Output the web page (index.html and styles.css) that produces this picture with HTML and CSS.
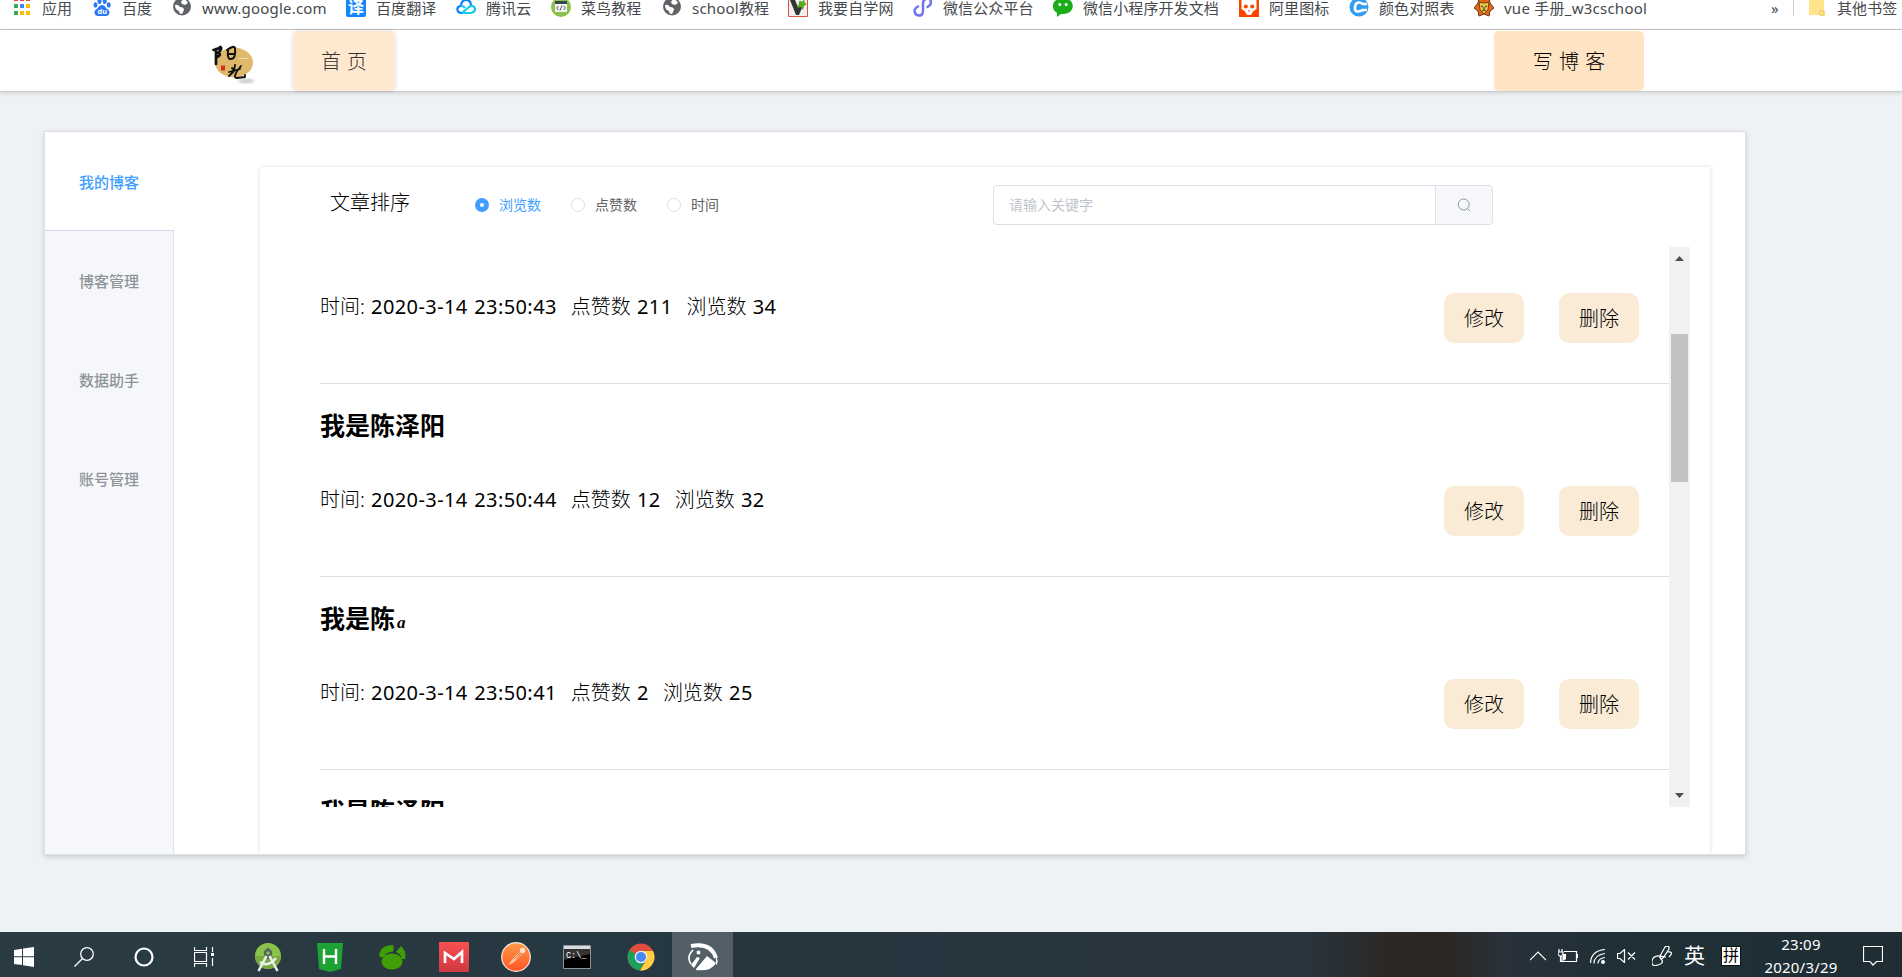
FILE: index.html
```html
<!DOCTYPE html>
<html lang="zh-CN">
<head>
<meta charset="utf-8">
<title>我的博客</title>
<link rel="stylesheet" href="styles.css">
</head>
<body>
<svg class="defs" width="0" height="0">
  <symbol id="globe" viewBox="0 0 20 20"><circle cx="10" cy="9.500" r="9" fill="#5f6368"/><path d="M3 8q3-1 5 2 4 0 4 3l-2 4q-3 0-3-3-4-1-4-6ZM11 2q4 1 5 4l-3 2-3-1-1-2Z" fill="#fff"/></symbol>
</svg>

<nav class="bookmarks">
  <div class="bookmarks-row">
    <a class="bm"><svg viewBox="0 0 20 20"><g fill="#ea4335"><path d="M2 0h4v4H2zM8 0h4v4H8zM14 0h4v4h-4z"/></g><path d="M2 7h4v4H2z" fill="#34a853"/><path d="M8 7h4v4H8z" fill="#4285f4"/><path d="M14 7h4v4h-4z" fill="#fbbc05"/><path d="M2 14h4v4H2z" fill="#34a853"/><path d="M8 14h4v4H8zM14 14h4v4h-4z" fill="#fbbc05"/></svg><span>应用</span></a>
    <a class="bm"><svg viewBox="0 0 20 20" fill="#2d78f4"><ellipse cx="7.500" cy="4" rx="2" ry="3"/><ellipse cx="12.700" cy="4" rx="2" ry="3"/><ellipse cx="3.500" cy="8" rx="2" ry="2.700"/><ellipse cx="16.700" cy="8" rx="2" ry="2.700"/><path d="M10 8c3 0 3.500 3 6 4.500s2 6.500-2 6.500H6c-4 0-4.500-5-2-6.500S7 8 10 8Z"/><text x="5.400" y="17.300" font-size="7.500" font-weight="700" fill="#fff">du</text></svg><span>百度</span></a>
    <a class="bm"><svg><use href="#globe"/></svg><span class="wide">www.google.com</span></a>
    <a class="bm"><svg viewBox="0 0 20 20"><rect width="20" height="20" rx="2" fill="#1487ff"/><text x="2" y="16" font-size="16" font-weight="700" fill="#fff">译</text></svg><span>百度翻译</span></a>
    <a class="bm"><svg viewBox="0 0 20 20" fill="none" stroke-width="2.200"><path d="M6 16C0 16 0 9 5 9c0-8 10-8 10-1" stroke="#0a7cff"/><path d="m6 16 7-6c4-3 7 1 5.500 4Q17 16 14 16H6M5 9q3 0 4 2" stroke="#13c9ec"/></svg><span>腾讯云</span></a>
    <a class="bm"><svg viewBox="0 0 20 20"><circle cx="10" cy="10" r="10" fill="#8bc34a"/><rect x="4" y="4" width="12" height="11" rx="1" fill="#f5f5f5"/><path d="M4 4h12v3H4z" fill="#37474f"/><path d="m7.500 9-2 2 2 2M12.500 9l2 2-2 2M11 8.500l-2 5" fill="none" stroke="#555"/></svg><span>菜鸟教程</span></a>
    <a class="bm"><svg><use href="#globe"/></svg><span class="wide">school教程</span></a>
    <a class="bm"><svg viewBox="0 0 20 20"><path d="M.5.5h19v19H.5z" fill="#f1eeee" stroke="#df5046"/><path d="M2 3h5l3 7 2-6 4 2-5 12H8Z" fill="#333"/><path d="m11 4 3 1 2-3 1 4 2 1-3 2-1 4-2-3-4 1 2-3Z" fill="#57ac1c"/></svg><span>我要自学网</span></a>
    <a class="bm"><svg viewBox="0 0 20 20"><path d="M5 9.500c-6 3-3 9 1 9s4-3 4-6V7c0-3 1-5.500 4.500-5.500S20 7 14.500 10" fill="none" stroke="#7377ee" stroke-width="2.500" stroke-linecap="round"/></svg><span>微信公众平台</span></a>
    <a class="bm"><svg viewBox="0 0 20 20"><path d="M10 1c13 0 13 16 0 16H8l-4 3v-4C-3 12-1 1 10 1Z" fill="#1aad19"/><circle cx="6.800" cy="7.500" r="1.500" fill="#fff"/><circle cx="13.200" cy="7.500" r="1.500" fill="#fff"/></svg><span>微信小程序开发文档</span></a>
    <a class="bm"><svg viewBox="0 0 20 20"><path d="M0 0h20v20H0z" fill="#ff4400"/><path d="M2.500 3q7.500-4 15 0v9L14 14.500 12 18H8l-2-3.500L2.500 12Z" fill="#fff"/><circle cx="6.800" cy="9.500" r="2" fill="#ff4400"/><circle cx="13.200" cy="9.500" r="2" fill="#ff4400"/><path d="m9 14 1-1 1 1-1 1Z" fill="#f40"/></svg><span>阿里图标</span></a>
    <a class="bm"><svg viewBox="0 0 20 20"><circle cx="10" cy="10" r="9.500" fill="#319cf2"/><path d="M18 7h-4q-7-4-8 3t8 3h4" fill="none" stroke="#fff" stroke-width="2.600"/></svg><span>颜色对照表</span></a>
    <a class="bm"><svg viewBox="0 0 20 20"><path d="m5 1 5 2 5-2 1 5 4 5-4 3-1 5-5-2-5 2-1-5-4-3 4-5Z" fill="#ef6512" stroke="#69320f"/><path d="m5 5 5 1 5-1-1 8-4 4-4-4Z" fill="#e2c64a" stroke="#6b3b14"/><path d="m7 9 2 1M13 9l-2 1M10 10v3l-2 1M10 13l2 1" stroke="#4b2b11" fill="none"/></svg><span class="vue">vue 手册_w3cschool</span></a>
    <span class="more">»</span>
    <a class="bm other"><svg viewBox="0 0 20 20"><path d="M2 0h15v14l1 1v4h-5v-1H2Z" fill="#ffe48c"/><path d="M13 14h4v4h-4Z" fill="#ffe694" stroke="#efc951"/></svg><span>其他书签</span></a>
  </div>
</nav>

<header class="site-header">
  <svg class="logo" viewBox="0 0 44 50"><defs><filter id="soft"><feGaussianBlur stdDeviation="1.500"/></filter></defs><ellipse cx="34" cy="41" rx="8" ry="2.500" fill="#999" opacity=".5" filter="url(#soft)"/><ellipse cx="22" cy="22.500" rx="19" ry="15" fill="#dfb96b"/><g fill="none" stroke="#111" stroke-linecap="round" stroke-linejoin="round"><path d="M1.500 10q5-1 7-3 2 2-2.500 6 4 1-.5 4M4 9v15" stroke-width="2.700"/><path d="M15 10q7-5 8-2 1 11-4 11-4 1-3-9M16 14h6" stroke-width="2"/><path d="m20 28 2 2M29 26l-3 4M17 32l11-3M23 25l-1 6-5 5M25 31q-4 7 0 7l8-1v-2" stroke-width="1.800"/></g><path d="M9 25.500h4v5H9z" fill="#dc2b20"/><path d="M27 18.500h9" stroke="#f0dcae"/></svg>
  <a class="home">首 页</a>
  <a class="write">写 博 客</a>
</header>

<main class="stage">
  <section class="panel">
    <nav class="tabs">
      <a class="tab active">我的博客</a>
      <a class="tab">博客管理</a>
      <a class="tab">数据助手</a>
      <a class="tab">账号管理</a>
    </nav>
    <div class="card">
      <div class="toolbar">
        <span class="sort-title">文章排序</span>
        <label class="radio on"><i></i><span>浏览数</span></label>
        <label class="radio"><i></i><span>点赞数</span></label>
        <label class="radio"><i></i><span>时间</span></label>
        <div class="search">
          <span class="placeholder">请输入关键字</span>
          <span class="search-btn"><svg viewBox="0 0 14 14" fill="none" stroke="#909399"><circle cx="6.700" cy="6.500" r="5.500"/><path d="m10.500 10.500 2.500 2.500"/></svg></span>
        </div>
      </div>
      <div class="list-wrap">
        <div class="list">
          <article class="post first">
            <p class="meta"><span>时间: <b class="num">2020-3-14 23:50:43</b></span><span>点赞数 <b class="num">211</b></span><span>浏览数 <b class="num">34</b></span></p>
            <div class="actions"><button>修改</button><button>删除</button></div>
          </article>
          <article class="post">
            <h2>我是陈泽阳</h2>
            <p class="meta"><span>时间: <b class="num">2020-3-14 23:50:44</b></span><span>点赞数 <b class="num">12</b></span><span>浏览数 <b class="num">32</b></span></p>
            <div class="actions"><button>修改</button><button>删除</button></div>
          </article>
          <article class="post">
            <h2>我是陈<em>a</em></h2>
            <p class="meta"><span>时间: <b class="num">2020-3-14 23:50:41</b></span><span>点赞数 <b class="num">2</b></span><span>浏览数 <b class="num">25</b></span></p>
            <div class="actions"><button>修改</button><button>删除</button></div>
          </article>
          <article class="post"><h2>我是陈泽阳</h2></article>
        </div>
        <div class="scrollbar">
          <svg viewBox="0 0 9 5"><path d="M0 5 4.500 0 9 5Z"/></svg>
          <div class="thumb"></div>
          <svg class="down" viewBox="0 0 9 5"><path d="M0 0h9L4.500 5Z"/></svg>
        </div>
      </div>
    </div>
  </section>
</main>

<footer class="taskbar">
  <div class="apps">
    <span><svg width="20" height="20" viewBox="0 0 20 20" fill="#fff"><path d="m0 3 8-1.200V9.300H0ZM9 1.600 20 0v9.300H9ZM0 10.300h8v7.700L0 17ZM9 10.300h11V20L9 18.300Z"/></svg></span>
    <span><svg width="20" height="20" viewBox="0 0 20 20" fill="none" stroke="#fff" stroke-width="1.300"><circle cx="13" cy="7" r="6.300"/><path d="m8.500 11.500-8 8"/></svg></span>
    <span><svg width="20" height="20" viewBox="0 0 20 20" fill="none" stroke="#fff" stroke-width="2.200"><circle cx="10" cy="10" r="8.500"/></svg></span>
    <span><svg width="20" height="20" viewBox="0 0 20 20" fill="none" stroke="#fff"><path d="M.5 0v3.500h12V0M.5 5.500h12v9H.5ZM.5 20v-3.500h12V20M18.500 0v5M18.500 11v8" stroke-width="1.200"/><path d="M17 6h3v3h-3z" fill="#fff" stroke="none"/></svg></span>
    <span><svg width="28" height="30" viewBox="0 0 28 30"><circle cx="14" cy="14" r="13" fill="#8bc34a"/><path d="M1 14h26a13 13 0 0 1-26 0" fill="#78aa41"/><circle cx="14" cy="11" r="3" fill="none" stroke="#56635e" stroke-width="2.500"/><path d="M14 6v2M14 14v3" stroke="#56635e" stroke-width="2"/><path d="m12.500 14-8 15M15.500 14l8 15M6 20q8 6 16-4" fill="none" stroke="#eceff1" stroke-width="2.500"/></svg></span>
    <span><svg width="26" height="30" viewBox="0 0 26 30"><path d="M0 1h26l-2 26-11 3-11-3Z" fill="#1ca334"/><path d="M7 7v15M19 7v15M7 14.500h12" stroke="#fff" stroke-width="2.400"/></svg></span>
    <span><svg width="28" height="28" viewBox="0 0 28 28" fill="#3f9d05"><ellipse cx="14" cy="18.500" rx="10.500" ry="8"/><path d="M1 13Q2 2 15 2q2 5-1 7-6 0-8 5-4 1-5-1ZM18 9l5-6q6 6 4 13h-3q-1-5-6-7Z"/></svg></span>
    <span><svg width="30" height="30" viewBox="0 0 30 30"><defs><linearGradient id="rg" x2="0" y2="1"><stop stop-color="#f75151"/><stop offset="1" stop-color="#cf3940"/></linearGradient></defs><path d="M0 0h30v30H0z" fill="url(#rg)"/><path d="M6 21V11l9 6 8-7v11" fill="none" stroke="#fff" stroke-width="2.700"/></svg></span>
    <span><svg width="30" height="30" viewBox="0 0 30 30"><defs><linearGradient id="og" x2="0" y2="1"><stop stop-color="#ff9b46"/><stop offset="1" stop-color="#ff5325"/></linearGradient></defs><circle cx="15" cy="15" r="14.300" fill="url(#og)" stroke="#f5e6df" stroke-width="1.200"/><circle cx="21.500" cy="8.500" r="2.700" fill="#ffe0cc"/><path d="m7 23 7-9 5-4 2 2-5 6-6 4Z" fill="#ffc6a5"/><path d="m13 17 6-6M15 19l5-8" stroke="#f17438"/></svg></span>
    <span class="cmd"><svg width="28" height="24" viewBox="0 0 28 24"><path d="M.5.5h27v23H.5z" fill="#000" stroke="#8e9499"/><path d="M1 1h26v3H1z" fill="#d8dce0"/><path d="M1 4h26v5L1 15Z" fill="#333"/><text x="3" y="12.500" font-size="8.500" font-family="Liberation Mono" fill="#fff">C:\_</text></svg></span>
    <span><svg width="28" height="28" viewBox="0 0 28 28"><circle cx="14" cy="14" r="13.500" fill="#de4f40"/><path d="M2.300 7.300A13.500 13.500 0 0 0 13 27.500L18 18l-4-4Z" fill="#1b9f5b"/><path d="M14 8h12A13.500 13.500 0 0 1 13 27.500L20 16Z" fill="#ffce43"/><circle cx="14" cy="14" r="6.300" fill="#f1f1f1"/><circle cx="14" cy="14" r="5" fill="#4688f4"/></svg></span>
    <span class="current"><svg width="30" height="28" viewBox="0 0 30 28"><path d="M3 3q20-4 25 12" fill="none" stroke="#fff" stroke-width="4"/><path d="M5 7Q-2 14 3 21" fill="none" stroke="#fff" stroke-width="1.600"/><path d="m3 22 6-8 3 1-6 10ZM8 26 19 13l9 7q-5 9-20 7Z" fill="#fff"/><path d="M28 14q3 5 0 8M9 8h3v3H9z" fill="#fff" stroke="#fff" stroke-width=".5"/></svg></span>
  </div>
  <div class="tray">
    <svg width="16" height="10" viewBox="0 0 16 10"><path d="m0 9 8-8 8 8"/></svg>
    <svg width="20" height="14" viewBox="0 0 20 14"><path d="M6 2.500h12.500v10H4V7M19.500 5v4M1 0v3M4 0v3M0 3h5v2L3.500 7h-2L0 5ZM2.500 7v5.500H5"/><path d="M5 5h3v5l-3 2Z" fill="#fff" stroke="none"/></svg>
    <svg width="15" height="15" viewBox="0 0 15 15"><path d="M.5 14Q1 2 15 .5M4 14.500Q4 6 15 4.500M8 14.500Q8 9.500 15 8.500"/><circle cx="13" cy="13" r="2" fill="#fff" stroke="none"/></svg>
    <svg width="19" height="14" viewBox="0 0 19 14"><path d="M.5 4.500H3L7.500.5v13L3 9.500H.5ZM11 3.500l7 7M18 3.500l-7 7"/></svg>
    <svg width="20" height="20" viewBox="0 0 20 20"><path d="M9 13 8 10 13 1q2-2 4 0v2l-6 9ZM15 6q8-1 2 5M9 10q-8-1-9 5t6 4 3-6 5-2"/></svg>
    <span class="ime">英</span>
    <span class="pin">拼</span>
    <div class="clock"><span>23:09</span><span>2020/3/29</span></div>
    <svg width="20" height="20" viewBox="0 0 20 20"><path d="M.5.500h19v15h-6L10 19l-3-3.500H.5Z"/></svg>
  </div>
</footer>
</body>
</html>
```

FILE: styles.css
```css
* { box-sizing: border-box; }

body {
  margin: 0;
  height: 977px;
  overflow: hidden;
  display: flex;
  flex-direction: column;
  background: #eef2f5;
  color: #000;
  font-family: "Noto Sans", "Noto Sans CJK SC", sans-serif;
  font-size: 20px;
}

svg { display: block; flex: none; }
.defs { position: absolute; }

/* bookmarks bar */
.bookmarks {
  height: 30px;
  flex: none;
  background: #fff;
  border-bottom: 1px solid #c6c6c6;
}
.bookmarks-row {
  display: grid;
  grid-template-columns: 80px 80px 174px 110px 95px 111px 126px 125px 140px 186px 110px 125px 297px 22px 110px;
  height: 16px;
  margin-left: 12px;
  align-items: end;
  font-size: 15px;
  line-height: 16px;
  color: #45494d;
  white-space: nowrap;
}
.bm { display: flex; gap: 10px; height: 16px; }
.bm svg { width: 20px; height: 20px; margin-top: -3px; }
.bm span { letter-spacing: 0.1px; }
.bm .wide { letter-spacing: 0.2px; }
.bm .vue { letter-spacing: 0.25px; }
.more { line-height: 16px; }
.other {
  padding-left: 13px;
  border-left: 1px solid #ccc;
}

/* site header */
.site-header {
  display: flex;
  flex: none;
  height: 62px;
  padding: 1px 258px 0 212px;
  background: #fff;
  border-bottom: 1px solid #cdcdcd;
  box-shadow: 0 1px 4px rgba(0, 0, 0, 0.15);
}
.logo { width: 44px; height: 50px; margin-top: 9px; }
.home, .write {
  height: 60px;
  line-height: 61px;
  text-align: center;
  border-radius: 5px;
  font-weight: 300;
  word-spacing: 1px;
}
.home {
  width: 102px;
  margin-left: 37px;
  background: #ffe8d0;
  color: #333;
  box-shadow: 0 0 4px rgba(0, 0, 0, 0.15);
}
.write { width: 150px; margin-left: auto; background: #ffe4c4; }

/* main panel */
.stage { flex: 1; padding: 39px 0 0 44px; }
.panel {
  display: flex;
  width: 1702px;
  height: 724px;
  background: #fff;
  border: 1px solid #dcdfe6;
  box-shadow: 0 2px 5px rgba(0, 0, 0, 0.16);
}
.tabs {
  width: 129px;
  display: flex;
  flex-direction: column;
  background: #f5f7fa;
  border-right: 1px solid #dfe4ed;
}
.tab {
  height: 99px;
  line-height: 100px;
  text-align: center;
  font-size: 15px;
  font-weight: 500;
  color: #909399;
}
.tab.active {
  width: 129px;
  padding-right: 1px;
  background: #fff;
  border-bottom: 1px solid #d1dbe5;
  color: #409eff;
}
.card {
  width: 1450px;
  height: 687px;
  margin: 35px 0 0 86px;
  box-shadow: 0 0 4px rgba(0, 0, 0, 0.15);
  clip-path: inset(-4px -4px 0 -4px);
}

/* sorting and search */
.toolbar {
  display: flex;
  align-items: center;
  height: 80px;
  padding: 0 217px 4px 70px;
}
.sort-title { width: 145px; margin-top: -7px; font-weight: 300; }
.radio {
  display: flex;
  align-items: center;
  width: 96px;
  font-size: 14px;
  color: #606266;
}
.radio span { margin-top: -2px; }
.radio i {
  width: 14px;
  height: 14px;
  margin-right: 10px;
  border: 1px solid #dcdfe6;
  border-radius: 50%;
}
.radio.on { color: #409eff; }
.radio.on i { border: 5px solid #409eff; }
.search {
  display: flex;
  width: 500px;
  height: 40px;
  margin-left: auto;
  border: 1px solid #dcdfe6;
  border-radius: 4px;
  overflow: hidden;
}
.placeholder {
  flex: 1;
  padding-left: 15px;
  font-size: 14px;
  line-height: 37px;
  color: #c0c4cc;
}
.search-btn {
  width: 57px;
  padding: 12px 0 0 21px;
  background: #f5f7fa;
  border-left: 1px solid #dcdfe6;
}
.search-btn svg { width: 14px; height: 14px; }

/* post list */
.list-wrap {
  display: flex;
  height: 560px;
  padding: 0 20px 0 60px;
}
.list { flex: 1; overflow: hidden; }
.post {
  display: grid;
  grid-template: 86px 106px / 1fr auto;
  height: 193px;
  border-bottom: 1px solid #dcdfe6;
}
.post.first { grid-template-rows: 30px 106px; height: 137px; }
.post h2 {
  grid-column: 1 / 3;
  margin: 0;
  font-size: 25px;
  line-height: 83px;
}
.post em {
  margin-left: 2px;
  font: italic bold 17px "Liberation Serif", serif;
}
.meta {
  grid-row: 2;
  display: flex;
  gap: 14px;
  margin: 16px 0 0;
  line-height: 28px;
  font-weight: 300;
}
.meta span { white-space: pre; word-spacing: 1px; }
.num { font-weight: 400; letter-spacing: 0.4px; }
.actions {
  grid-row: 2;
  display: flex;
  gap: 35px;
  margin: 16px 30px 0 0;
}
.actions button {
  width: 80px;
  height: 50px;
  padding: 0 0 2px;
  border: 0;
  border-radius: 10px;
  background: #faebd7;
  color: #000;
  font: inherit;
  font-weight: 300;
}
.scrollbar {
  display: flex;
  flex-direction: column;
  align-items: center;
  width: 21px;
  padding: 9px 0;
  background: #f1f1f1;
}
.scrollbar svg { width: 9px; height: 5px; fill: #505050; }
.scrollbar .down { margin-top: auto; }
.thumb {
  width: 17px;
  height: 148px;
  margin-top: 73px;
  background: #c1c1c1;
}

/* taskbar */
.taskbar {
  display: flex;
  flex: none;
  justify-content: space-between;
  height: 45px;
  color: #fff;
  background: linear-gradient(90deg, #2b3b44 0, #253740 35%, #28343e 64%, #29333b 69%, #2b2826 73%, #2b2725 76%, #29313a 79%, #203037 84%, #1f2e35 100%);
}
.apps {
  display: grid;
  grid-template-columns: 48px 72px 48px 72px 56px 68px 56px 68px 56px 66px 62px 61px;
}
.apps span { display: flex; align-items: center; justify-content: center; padding-top: 5px; }
.apps span:nth-child(n+5) { padding-top: 4px; }
.apps .cmd { padding-top: 3px; }
.apps .current { background: #525f66; }
.tray {
  display: flex;
  align-items: center;
  padding: 3px 19px 0 0;
}
.tray > svg { fill: none; stroke: #fff; stroke-width: 1.2; margin-right: 12px; }
.tray > svg:nth-child(4) { margin-right: 16px; }
.tray > svg:last-child { margin: 0; }
.ime { font-size: 21px; line-height: 28px; margin-top: -3px; }
.pin {
  width: 20px;
  height: 20px;
  margin-left: 16px;
  border: 1px solid #111;
  background: #fff;
  color: #000;
  font-size: 16px;
  line-height: 17px;
  text-align: center;
}
.clock {
  width: 80px;
  margin: 0 22px 0 20px;
  display: flex;
  flex-direction: column;
  text-align: center;
  font-size: 15px;
  letter-spacing: 0.2px;
  line-height: 23px;
}
```
